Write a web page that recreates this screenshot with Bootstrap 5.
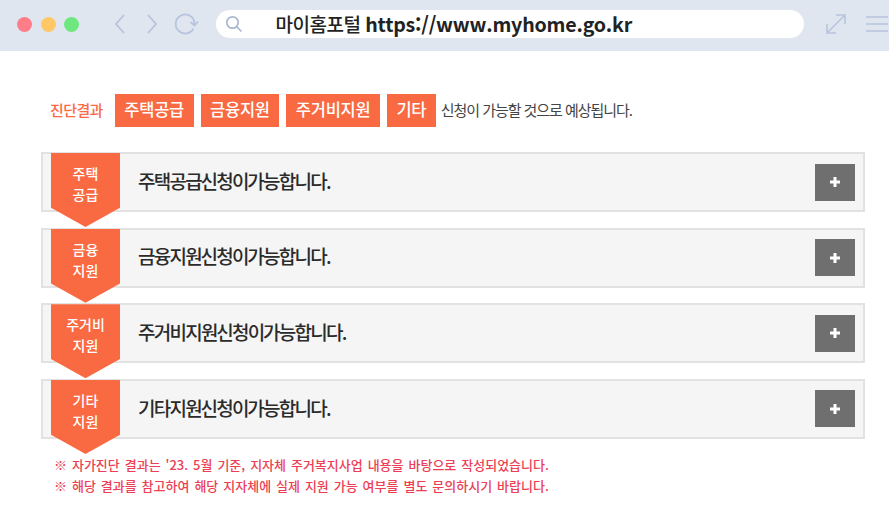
<!DOCTYPE html>
<html lang="ko">
<head>
<meta charset="utf-8">
<title>마이홈포털</title>
<link href="https://cdn.jsdelivr.net/npm/bootstrap@5.3.0/dist/css/bootstrap.min.css" rel="stylesheet">
<style>
html,body{height:530px;overflow:hidden;background:#fff}
body{font-family:"Noto Sans CJK KR","Noto Sans",sans-serif}
.chrome-bar{height:51px;background:#e0e6f0;padding:0 0 3px 17px}
.dot{width:15px;height:15px;border-radius:50%;margin-right:8.5px}
.dot-r{background:#ff7d88}.dot-y{background:#ffc766}.dot-g{background:#6ee77f}
.nav-ico{display:block;flex:none}
.ico-back{margin-left:25px}
.ico-next{margin-left:18px}
.ico-reload{margin-left:15px}
.ico-expand{margin-left:21px}
.ico-menu{margin-left:18px}
.url-pill{width:588px;height:28px;background:#fff;border-radius:14px;margin-left:16px;padding-left:9px}
.url-text{margin-left:33px;font-size:19px;font-weight:500;color:#222;letter-spacing:-.5px;white-space:nowrap}
.url-latin{font-size:19.6px;font-weight:600;letter-spacing:-.2px}
.result-line{margin:43px 0 0 50px;height:33px}
.result-label{color:#fb6a43;font-size:15px;font-weight:500;letter-spacing:-.6px;margin-right:12px}
.chip{background:#f96a42;color:#fff;font-size:16.5px;font-weight:500;height:33px;line-height:31px;padding:0 9.5px;margin-right:7px;letter-spacing:-.25px;white-space:nowrap}
.result-tail{color:#444;font-size:15px;letter-spacing:-1.05px;margin-left:-2px;white-space:nowrap}
.acc-list{margin:25px 24px 0 41px;row-gap:15.67px}
.acc-row{height:60px;background:#f5f5f5;border:2px solid #e2e2e2;padding:0 8px 0 8px}
.flag{width:69px;height:74px;margin:-1px 0 -15px;flex:none;background:#fa6a42;color:#fff;font-size:14px;font-weight:500;line-height:21px;text-align:center;padding-top:10px;clip-path:polygon(0 0,100% 0,100% 74%,50% 100%,0 74%);position:relative;z-index:1}
.acc-title{margin:-2px 0 0 18px;font-size:19px;font-weight:500;color:#2b2b2b;letter-spacing:-1.75px;word-spacing:-4px}
.plus-btn{width:40px;height:37px;background:#6f6f6f;border:0;border-radius:0;flex:none}
.notes{margin:15px 0 0 54px;font-size:13px;font-weight:500;line-height:21px;color:#ec3f55;word-spacing:1.3px;white-space:nowrap}
</style>
</head>
<body>
<div class="chrome-bar d-flex align-items-center">
  <span class="dot dot-r"></span><span class="dot dot-y"></span><span class="dot dot-g"></span>
  <svg class="nav-ico ico-back" width="14" height="22" viewBox="0 0 14 22" fill="none" stroke="#b6c4dd" stroke-width="1.8"><path d="M11 2 3 11l8 9"/></svg>
  <svg class="nav-ico ico-next" width="14" height="22" viewBox="0 0 14 22" fill="none" stroke="#b6c4dd" stroke-width="1.8"><path d="m3 2 8 9-8 9"/></svg>
  <svg class="nav-ico ico-reload" width="26" height="24" viewBox="0 0 26 24" fill="none" stroke="#b6c4dd" stroke-width="1.8"><path d="M19.5 16.5A9.5 9.5 0 1 1 20 8.5l.5 4"/><path d="m16.5 10 4 3.5 3.5-4"/></svg>
  <div class="url-pill d-flex align-items-center">
    <svg class="nav-ico" width="18" height="18" viewBox="0 0 18 18" fill="none" stroke="#a9b8d2" stroke-width="1.7"><circle cx="7.5" cy="7.5" r="5.7"/><path d="m11.8 11.8 4.7 4.7"/></svg>
    <span class="url-text">마이홈포털 <span class="url-latin">https://www.myhome.go.kr</span></span>
  </div>
  <svg class="nav-ico ico-expand" width="22" height="22" viewBox="0 0 22 22" fill="none" stroke="#b6c4dd" stroke-width="1.6"><path d="M2 20 20 2M11 2h9v9M2 11v9h9"/></svg>
  <svg class="nav-ico ico-menu" width="24" height="20" viewBox="0 0 24 20" fill="none" stroke="#b6c4dd" stroke-width="1.6"><path d="M1 3h22M1 10h22M1 17h22"/></svg>
</div>

<div class="result-line d-flex align-items-center">
  <span class="result-label">진단결과</span>
  <span class="chip">주택공급</span>
  <span class="chip">금융지원</span>
  <span class="chip">주거비지원</span>
  <span class="chip">기타</span>
  <span class="result-tail">신청이 가능할 것으로 예상됩니다.</span>
</div>

<div class="acc-list d-flex flex-column">
  <div class="acc-row d-flex align-items-center">
    <div class="flag align-self-start">주택<br>공급</div>
    <span class="acc-title">주택공급 신청이 가능합니다.</span>
    <button class="plus-btn btn ms-auto d-flex align-items-center justify-content-center" aria-label="열기"><svg width="12" height="12" viewBox="0 0 12 12"><path d="M6 1v10M1 6h10" stroke="#fff" stroke-width="3"/></svg></button>
  </div>
  <div class="acc-row d-flex align-items-center">
    <div class="flag align-self-start">금융<br>지원</div>
    <span class="acc-title">금융지원 신청이 가능합니다.</span>
    <button class="plus-btn btn ms-auto d-flex align-items-center justify-content-center" aria-label="열기"><svg width="12" height="12" viewBox="0 0 12 12"><path d="M6 1v10M1 6h10" stroke="#fff" stroke-width="3"/></svg></button>
  </div>
  <div class="acc-row d-flex align-items-center">
    <div class="flag align-self-start">주거비<br>지원</div>
    <span class="acc-title">주거비지원 신청이 가능합니다.</span>
    <button class="plus-btn btn ms-auto d-flex align-items-center justify-content-center" aria-label="열기"><svg width="12" height="12" viewBox="0 0 12 12"><path d="M6 1v10M1 6h10" stroke="#fff" stroke-width="3"/></svg></button>
  </div>
  <div class="acc-row d-flex align-items-center">
    <div class="flag align-self-start">기타<br>지원</div>
    <span class="acc-title">기타지원 신청이 가능합니다.</span>
    <button class="plus-btn btn ms-auto d-flex align-items-center justify-content-center" aria-label="열기"><svg width="12" height="12" viewBox="0 0 12 12"><path d="M6 1v10M1 6h10" stroke="#fff" stroke-width="3"/></svg></button>
  </div>
</div>

<div class="notes">
  <div>※ 자가진단 결과는 '23. 5월 기준, 지자체 주거복지사업 내용을 바탕으로 작성되었습니다.</div>
  <div>※ 해당 결과를 참고하여 해당 지자체에 실제 지원 가능 여부를 별도 문의하시기 바랍니다.</div>
</div>
</body>
</html>
